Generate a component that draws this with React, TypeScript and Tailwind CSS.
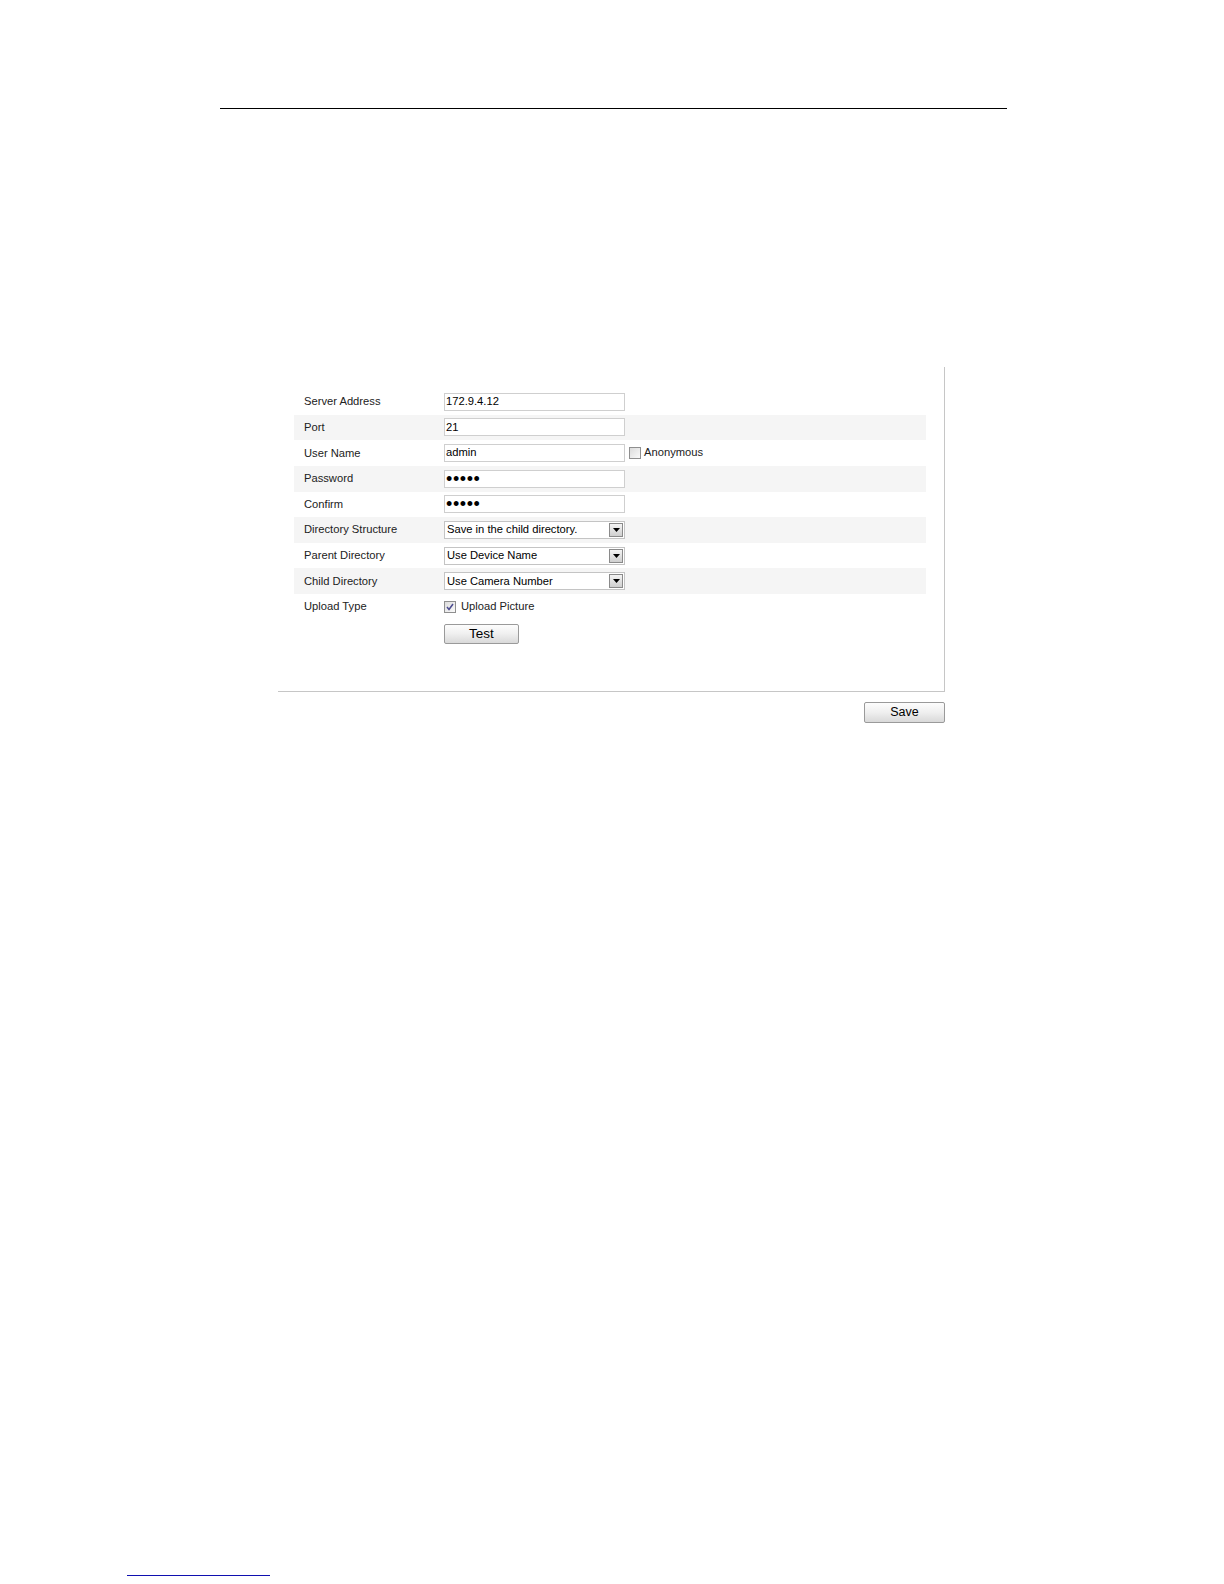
import React from "react";

const font = { fontFamily: '"Liberation Sans", Arial, sans-serif' };

function TextBox({ value, password }: { value: string; password?: boolean }) {
  return (
    <div className="flex h-[18px] w-[181px] items-center border border-[#cfcfcf] bg-white px-[1px]">
      {password ? (
        <span className="text-[18px] leading-none tracking-[0.6px] text-black">•••••</span>
      ) : (
        <span className="text-[11.2px] leading-none text-black">{value}</span>
      )}
    </div>
  );
}

function SelectBox({ value }: { value: string }) {
  return (
    <div className="flex h-[18px] w-[181px] items-center justify-between border border-[#c4c4c4] bg-white pl-[2px] pr-[1px]">
      <span className="text-[11.2px] leading-none text-black">{value}</span>
      <div className="flex h-[14px] w-[14px] items-center justify-center border border-[#8a8a8a] bg-gradient-to-b from-[#f4f4f4] to-[#cfcfcf]">
        <svg width="7" height="4" viewBox="0 0 7 4">
          <path d="M0 0h7L3.5 4z" fill="#000" />
        </svg>
      </div>
    </div>
  );
}

function CheckBox({ checked }: { checked?: boolean }) {
  return (
    <div className="flex h-[12px] w-[12px] items-center justify-center border border-[#8f8f8f] bg-gradient-to-br from-[#dcdcdc] to-[#fafafa]">
      {checked && (
        <svg width="8" height="8" viewBox="0 0 8 8">
          <path d="M1 4l2 2.5L7 1" fill="none" stroke="#4b4b8f" strokeWidth="1.5" />
        </svg>
      )}
    </div>
  );
}

function Button({ label, className }: { label: string; className: string }) {
  return (
    <div
      className={`flex items-center justify-center rounded-[2px] border border-[#9a9a9a] bg-gradient-to-b from-[#fdfdfd] via-[#efefef] to-[#d9d9d9] text-black ${className}`}
    >
      {label}
    </div>
  );
}

const rows: { label: string; field: React.ReactNode }[] = [
  { label: "Server Address", field: <TextBox value="172.9.4.12" /> },
  { label: "Port", field: <TextBox value="21" /> },
  {
    label: "User Name",
    field: (
      <div className="flex items-center">
        <TextBox value="admin" />
        <div className="ml-[4px] flex items-center gap-[3px]">
          <CheckBox />
          <span className="text-[11.2px] leading-none text-[#222]">Anonymous</span>
        </div>
      </div>
    ),
  },
  { label: "Password", field: <TextBox value="" password /> },
  { label: "Confirm", field: <TextBox value="" password /> },
  { label: "Directory Structure", field: <SelectBox value="Save in the child directory." /> },
  { label: "Parent Directory", field: <SelectBox value="Use Device Name" /> },
  { label: "Child Directory", field: <SelectBox value="Use Camera Number" /> },
  {
    label: "Upload Type",
    field: (
      <div className="flex items-center gap-[5px]">
        <CheckBox checked />
        <span className="text-[11.2px] leading-none text-[#222]">Upload Picture</span>
      </div>
    ),
  },
];

export default function App() {
  return (
    <div className="relative min-h-[1584px] w-[1224px] bg-white" style={font}>
      <div className="h-[108px]" />
      <div className="ml-[220px] h-px w-[787px] bg-black" />

      <div className="mt-[258px] ml-[278px] w-[667px]">
        <div className="h-[325px] border-r border-b border-[#c6c6c6] pt-[22px] pl-[16px]">
          <div className="w-[632px]">
            {rows.map((row, i) => (
              <div
                key={row.label}
                className={`flex h-[25.65px] items-center ${i % 2 === 1 ? "bg-[#f5f5f5]" : ""}`}
              >
                <div className="w-[150px] pl-[10px] text-[11.2px] leading-none text-[#222]">{row.label}</div>
                {row.field}
              </div>
            ))}
            <div className="mt-[4px] pl-[150px]">
              <Button label="Test" className="h-[20px] w-[75px] text-[13.5px]" />
            </div>
          </div>
        </div>
        <div className="mt-[10px] flex justify-end">
          <Button label="Save" className="h-[21px] w-[81px] text-[12.5px]" />
        </div>
      </div>

      <div className="absolute left-[127px] top-[1575px] h-px w-[143px] bg-[#1010b0]" />
    </div>
  );
}
